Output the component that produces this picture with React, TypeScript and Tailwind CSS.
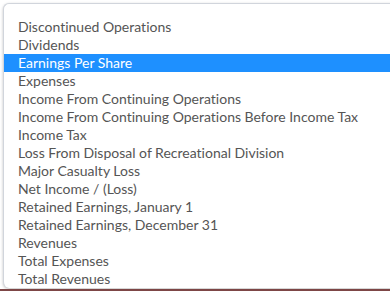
const options = [
  "Discontinued Operations",
  "Dividends",
  "Earnings Per Share",
  "Expenses",
  "Income From Continuing Operations",
  "Income From Continuing Operations Before Income Tax",
  "Income Tax",
  "Loss From Disposal of Recreational Division",
  "Major Casualty Loss",
  "Net Income / (Loss)",
  "Retained Earnings, January 1",
  "Retained Earnings, December 31",
  "Revenues",
  "Total Expenses",
  "Total Revenues",
];

export default function App() {
  const selected = "Earnings Per Share";

  return (
    <div className="w-[390px] h-[291px] bg-white overflow-hidden font-['Lato','Liberation_Sans',sans-serif] [font-variant-ligatures:none]">
      {/* Dropdown list */}
      <div className="ml-[3px] mt-[3px] w-[390px] h-[285px] bg-white border-l border-t border-gray-300 rounded-tl-md rounded-bl-md shadow-[0_1px_3px_rgba(0,0,0,0.25)] pt-[14px]">
        <ul className="flex flex-col">
          {options.map((o) => (
            <li
              key={o}
              className={
                o === selected
                  ? "h-[18px] leading-[18px] text-[14px] pl-[14px] bg-[#1e90ff] text-white"
                  : "h-[18px] leading-[18px] text-[14px] pl-[14px] text-[#555555]"
              }
            >
              {o}
            </li>
          ))}
        </ul>
      </div>
      <div className="h-[2px] mt-[1px] bg-[#7d4646]" />
    </div>
  );
}
